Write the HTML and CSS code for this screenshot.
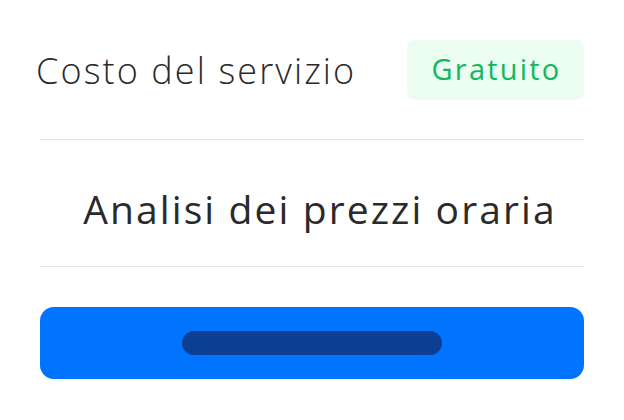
FILE: index.html
```html
<!DOCTYPE html>
<html lang="it">
<head>
<meta charset="utf-8">
<link rel="stylesheet" href="styles.css">
</head>
<body>
<div class="card">
  <div class="row">
    <span class="label">Costo del servizio</span>
    <span class="badge">Gratuito</span>
  </div>
  <div class="title">Analisi dei prezzi oraria</div>
  <div class="button"><span class="bar"></span></div>
</div>
</body>
</html>
```
FILE: styles.css
```css
html, body {
  margin: 0;
  padding: 0;
  background: #ffffff;
}
.card {
  margin: 0 40px;
  padding-top: 40px;
  font-family: "Open Sans", "Noto Sans", sans-serif;
  color: #2a2a2a;
}
.row {
  display: flex;
  align-items: center;
  justify-content: space-between;
  height: 60px;
  padding-bottom: 39px;
  border-bottom: 1px solid #e4e4e4;
}
.label {
  margin-left: -4px;
  font-size: 36px;
  font-weight: 300;
  letter-spacing: 2.1px;
}
.badge {
  display: flex;
  align-items: center;
  justify-content: center;
  width: 177px;
  height: 60px;
  padding-bottom: 3px;
  padding-left: 2px;
  box-sizing: border-box;
  background: #ebfcf1;
  border-radius: 8px;
  color: #14b85c;
  font-size: 29px;
  font-weight: 500;
  letter-spacing: 2.2px;
}
.title {
  display: flex;
  align-items: center;
  justify-content: center;
  height: 127px;
  border-bottom: 1px solid #e4e4e4;
  font-size: 39px;
  font-weight: 400;
  letter-spacing: 2.1px;
  padding-left: 16px;
  padding-top: 10px;
  box-sizing: border-box;
}
.button {
  margin-top: 40px;
  height: 72px;
  background: #0073ff;
  border-radius: 14px;
  display: flex;
  align-items: center;
  justify-content: center;
}
.bar {
  width: 260px;
  height: 24px;
  border-radius: 12px;
  background: #0a3f94;
}
```
